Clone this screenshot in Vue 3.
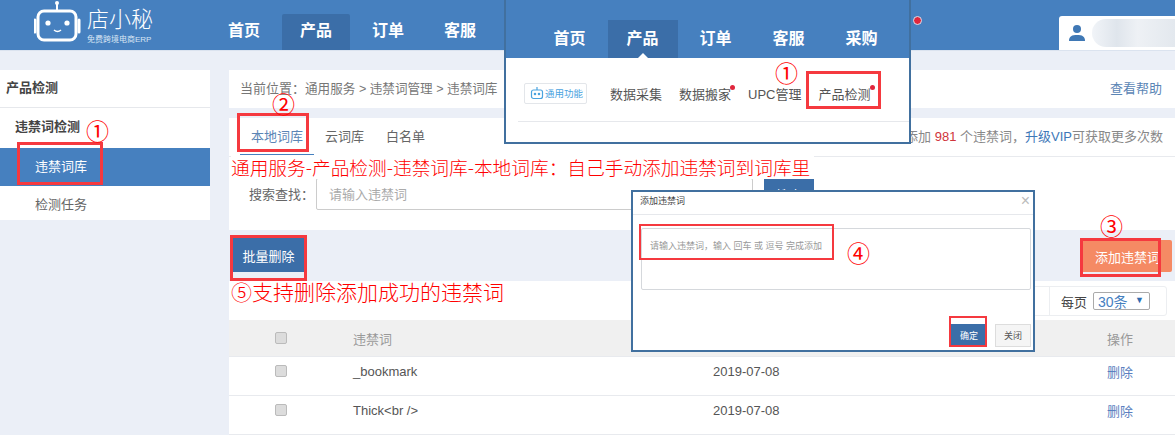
<template>
  <div class="page">
    <!-- top bar -->
    <header class="topbar">
      <div class="logo">
        <svg width="48" height="44" viewBox="0 0 48 44" fill="none" stroke="#fff">
          <path d="M23 2v8" stroke-width="2" />
          <circle cx="23" cy="3" r="2" fill="#fff" stroke="none" />
          <rect x="4" y="11" width="38" height="29" rx="6" stroke-width="3" />
          <path d="M1 20v12M45 20v12" stroke-width="3" stroke-linecap="round" />
          <circle cx="14" cy="23" r="2.6" fill="#fff" stroke="none" />
          <circle cx="33" cy="23" r="2.6" fill="#fff" stroke="none" />
          <path d="M20 30q3.500 3 7 0" stroke-width="1.500" />
        </svg>
        <div class="logo-text">
          <div class="logo-name">店小秘</div>
          <div class="logo-sub">免费跨境电商ERP</div>
        </div>
      </div>
      <nav class="nav">
        <a v-for="item in navItems" :key="item" class="nav-item" :class="{ active: item === '产品' }">{{ item }}</a>
      </nav>
      <div class="user-box">
        <svg width="18" height="18" viewBox="0 0 18 18" fill="#3f78b5">
          <circle cx="9" cy="5" r="4" />
          <path d="M1 17c0-5 3-6 8-6s8 1 8 6z" />
        </svg>
        <div class="user-blur"></div>
      </div>
    </header>

    <div class="content">
      <aside class="sidebar">
        <div class="side-title">产品检测</div>
        <div class="side-group">违禁词检测</div>
        <div class="side-link active">违禁词库</div>
        <div class="side-link">检测任务</div>
      </aside>

      <main class="main">
        <div class="crumb">
          <span>当前位置：</span>
          <span class="crumb-path">通用服务 &gt; 违禁词管理 &gt; 违禁词库</span>
          <a class="help">查看帮助</a>
        </div>

        <section class="filter">
          <div class="tabs">
            <a class="tab active">本地词库</a>
            <a class="tab">云词库</a>
            <a class="tab">白名单</a>
            <div class="quota">还可添加 <b>981</b> 个违禁词，<a>升级VIP</a>可获取更多次数</div>
          </div>
          <div class="search">
            <label>搜索查找：</label>
            <div class="search-input">请输入违禁词</div>
            <button class="btn-blue search-btn">搜索</button>
          </div>
        </section>

        <div class="toolbar">
          <button class="btn-blue batch">批量删除</button>
          <button class="btn-add">添加违禁词</button>
        </div>

        <section class="table-panel">
          <div class="pager">
            <div class="pager-box">
              <span class="pager-left"></span>
              <span>每页</span>
              <div class="page-select">30条<i>▼</i></div>
            </div>
          </div>
          <div class="row head">
            <div class="check-cell"><span class="check"></span></div>
            <div>违禁词</div>
            <div></div>
            <div>操作</div>
          </div>
          <div v-for="row in rows" :key="row" class="row">
            <div class="check-cell"><span class="check"></span></div>
            <div>{{ row }}</div>
            <div>2019-07-08</div>
            <div><a class="del">删除</a></div>
          </div>
        </section>
      </main>
    </div>

    <!-- pasted screenshot: menu -->
    <div class="shot-menu">
      <div class="menu-head">
        <a v-for="item in menuNav" :key="item" class="menu-nav" :class="{ active: item === '产品' }">{{ item }}</a>
        <span class="menu-arrow"></span>
      </div>
      <div class="menu-body">
        <div class="menu-tag">
          <svg width="14" height="14" viewBox="0 0 14 14" fill="none" stroke="#4aa3df" stroke-width="1.200">
            <rect x="1.500" y="4" width="11" height="8.500" rx="2" />
            <path d="M7 1v3" />
            <circle cx="5" cy="8" r=".7" fill="#4aa3df" />
            <circle cx="9" cy="8" r=".7" fill="#4aa3df" />
          </svg>
          <span>通用功能</span>
        </div>
        <span class="menu-link">数据采集</span>
        <span class="menu-link dot">数据搬家</span>
        <span class="menu-link">UPC管理</span>
        <span class="menu-link dot">产品检测</span>
      </div>
      <div class="menu-line"></div>
    </div>

    <!-- pasted screenshot: dialog -->
    <div class="shot-dialog">
      <div class="dialog-head">
        <span>添加违禁词</span>
        <span class="dialog-close">×</span>
      </div>
      <div class="dialog-area">请输入违禁词，输入 回车 或 逗号 完成添加</div>
      <div class="dialog-foot">
        <button class="dialog-ok">确定</button>
        <button class="dialog-cancel">关闭</button>
      </div>
    </div>

    <!-- annotations -->
    <div class="mark m-side"></div>
    <div class="mark m-tab"></div>
    <div class="mark m-menu"></div>
    <div class="mark m-area"></div>
    <div class="mark m-ok"></div>
    <div class="mark m-add"></div>
    <div class="mark m-batch"></div>
    <span class="num n1">①</span>
    <span class="num n2">②</span>
    <span class="num n3">①</span>
    <span class="num n4">③</span>
    <span class="num n5">④</span>
    <div class="note note-top">通用服务-产品检测-违禁词库-本地词库：自己手动添加违禁词到词库里</div>
    <div class="note note-bottom">⑤支持删除添加成功的违禁词</div>
    <span class="red-dot"></span>
  </div>
</template>

<script setup>
const navItems = ['首页', '产品', '订单', '客服']
const menuNav = ['首页', '产品', '订单', '客服', '采购']
const rows = ['_bookmark', 'Thick<br />']
</script>

<style>
body {
  margin: 0;
  overflow: hidden;
}
</style>

<style scoped>
.page {
  position: relative;
  width: 1175px;
  height: 435px;
  overflow: hidden;
  background: #ebeff7;
  color: #555;
  font-family: "Liberation Sans", "Noto Sans CJK SC", sans-serif;
  font-size: 13px;
}

.topbar {
  display: flex;
  height: 50px;
  background: #4680bf;
  border-bottom: 1px solid #dbe3ef;
  box-sizing: content-box;
}
.logo {
  display: flex;
  flex: none;
  width: 210px;
  padding-left: 34px;
  color: #fff;
  box-sizing: border-box;
}
.logo svg {
  flex: none;
  margin-right: 5px;
}
.logo-name {
  margin-top: 7px;
  font-size: 22px;
  line-height: 26px;
  font-weight: 300;
}
.logo-sub {
  margin-top: 2px;
  font-size: 8px;
  line-height: 10px;
  white-space: nowrap;
  color: #d9e6f4;
}
.nav {
  display: flex;
  gap: 4px;
  margin-top: 14px;
}
.nav-item {
  width: 68px;
  height: 36px;
  line-height: 34px;
  text-align: center;
  color: #fff;
  font-size: 16px;
  font-weight: 700;
  border-radius: 2px 2px 0 0;
}
.nav-item.active {
  background: #3b6ea8;
}
.user-box {
  display: flex;
  align-items: center;
  gap: 6px;
  margin: 16px 0 0 auto;
  width: 116px;
  padding-left: 9px;
  background: #fff;
  border-radius: 3px 0 0 0;
  box-sizing: border-box;
}
.user-blur {
  flex: 1;
  height: 28px;
  border-radius: 14px 0 0 14px;
  background: linear-gradient(90deg, #f1f4f8, #dfe5ec 30%, #eef1f5 55%, #e3e8ee);
}

.content {
  display: flex;
  align-items: flex-start;
  padding-top: 19px;
}
.sidebar {
  flex: none;
  width: 210px;
  height: 150px;
  background: #fff;
}
.side-title {
  height: 38px;
  padding-left: 6px;
  line-height: 36px;
  color: #444;
  font-weight: 700;
  border-bottom: 1px solid #e6e8ec;
  box-sizing: border-box;
}
.side-group {
  height: 40px;
  padding-left: 15px;
  line-height: 38px;
  color: #444;
  font-weight: 700;
}
.side-link {
  height: 38px;
  padding-left: 35px;
  line-height: 38px;
  color: #666;
}
.side-link.active {
  background: #4680bf;
  color: #fff;
}

.main {
  flex: none;
  width: 946px;
  margin-left: 19px;
}
.crumb {
  display: flex;
  height: 38px;
  padding: 0 13px 0 11px;
  align-items: center;
  line-height: 16px;
  background: #fff;
  color: #777;
  box-sizing: border-box;
}
.crumb-path {
  font-size: 12.600px;
}
.help {
  margin-left: auto;
  color: #5b85b5;
}
.filter {
  height: 112px;
  margin-top: 10px;
  background: #fff;
}
.tabs {
  display: flex;
  height: 38px;
  padding-left: 11px;
  border-bottom: 1px solid #e8eaee;
  box-sizing: content-box;
}
.tab {
  padding: 0 11px;
  line-height: 38px;
  color: #666;
}
.tab.active {
  color: #5b85b5;
  border-bottom: 2px solid #4680bf;
  height: 36px;
}
.quota {
  margin-left: auto;
  padding-right: 12px;
  line-height: 38px;
  color: #888;
}
.quota b {
  font-weight: 400;
  color: #d0343c;
}
.quota a {
  color: #3e78b8;
}
.search {
  display: flex;
  align-items: flex-start;
  padding: 21px 0 0 20px;
}
.search label {
  width: 67px;
  margin-top: 6px;
  color: #666;
}
.search-input {
  width: 437px;
  height: 32px;
  margin-right: 11px;
  padding-left: 12px;
  line-height: 32px;
  color: #aaa;
  border: 1px solid #ccc;
  border-radius: 2px;
  box-sizing: border-box;
}
.search-btn {
  width: 50px;
  height: 32px;
}
.btn-blue {
  border: 0;
  padding: 0;
  background: #3b6ea8;
  color: #fff;
  font: inherit;
}
.toolbar {
  display: flex;
  height: 51px;
  align-items: flex-start;
  justify-content: space-between;
  padding-right: 3px;
}
.batch {
  width: 73px;
  height: 34px;
  margin: 8px 0 0 3px;
}
.btn-add {
  width: 89px;
  height: 32px;
  margin-top: 10px;
  border: 0;
  border-radius: 0 2px 2px 0;
  background: #f58a64;
  color: #fff;
  font: inherit;
}
.table-panel {
  height: 154px;
  background: #fff;
}
.pager {
  display: flex;
  justify-content: flex-end;
  height: 39px;
  padding: 5px 8px 0 0;
  box-sizing: border-box;
}
.pager-box {
  display: flex;
  align-items: center;
  gap: 6px;
  width: 150px;
  height: 30px;
  padding-left: 31px;
  border: 1px solid #eceef1;
  border-radius: 3px;
  box-sizing: border-box;
  color: #444;
}
.pager-left {
  height: 28px;
  margin-right: 5px;
  border-left: 1px solid #eceef1;
}
.page-select {
  position: relative;
  width: 57px;
  height: 18px;
  padding-left: 4px;
  line-height: 18px;
  font-size: 14px;
  color: #4680bf;
  border: 1px solid #aaa;
  border-radius: 2px;
  box-sizing: border-box;
}
.page-select i {
  position: absolute;
  right: 5px;
  top: -2px;
  font-size: 9px;
  font-style: normal;
  color: #2f6cb0;
}
.row {
  display: grid;
  grid-template-columns: 124px 360px 394px 1fr;
  height: 28px;
  padding-bottom: 10px;
  align-items: center;
  color: #555;
  border-bottom: 1px solid #e8eaee;
  box-sizing: content-box;
}
.row.head {
  height: 36px;
  padding-bottom: 0;
  background: #f0f0f0;
  color: #999;
}
.check-cell {
  padding-left: 46px;
  display: flex;
}
.check {
  width: 12px;
  height: 12px;
  background: #dcdcdc;
  border: 1px solid #bbb;
  border-radius: 2px;
  box-sizing: border-box;
}
.del {
  color: #5b7fc0;
}

/* pasted menu */
.shot-menu {
  position: absolute;
  left: 504px;
  top: 0;
  width: 407px;
  height: 144px;
  border: 2px solid #41709f;
  border-top: 0;
  background: #fff;
  box-sizing: border-box;
}
.menu-head {
  position: relative;
  display: flex;
  height: 58px;
  padding-left: 27px;
  background: #4680bf;
  align-items: flex-end;
}
.menu-nav {
  width: 73px;
  height: 38px;
  line-height: 38px;
  text-align: center;
  color: #fff;
  font-size: 16px;
  font-weight: 700;
}
.menu-nav.active {
  width: 70px;
  margin: 0 1.500px;
  background: #3b6ea8;
}
.menu-arrow {
  position: absolute;
  left: 132px;
  bottom: 0;
  border: 5px solid transparent;
  border-bottom-color: #fff;
  border-top: 0;
}
.menu-body {
  display: flex;
  align-items: center;
  height: 50px;
  padding: 10px 0 0 18px;
  box-sizing: content-box;
  color: #555;
}
.menu-tag {
  display: flex;
  flex: none;
  align-items: center;
  gap: 1px;
  width: 63px;
  height: 21px;
  margin-right: 23px;
  padding-left: 5px;
  color: #4aa3df;
  font-size: 9.500px;
  border: 1px solid #e3e6ea;
  border-radius: 2px;
  box-sizing: border-box;
  white-space: nowrap;
}
.menu-link {
  position: relative;
  margin-right: 17px;
  white-space: nowrap;
}
.menu-link.dot::after {
  content: "";
  position: absolute;
  right: -4px;
  top: 1px;
  width: 5px;
  height: 5px;
  border-radius: 50%;
  background: #e0263c;
}
.menu-line {
  height: 1px;
  margin: 3px 0 0 12px;
  background: #e6e8ec;
}

/* pasted dialog */
.shot-dialog {
  position: absolute;
  left: 631px;
  top: 190px;
  width: 404px;
  height: 162px;
  background: #fff;
  border: 2px solid #41709f;
  box-sizing: border-box;
}
.dialog-head {
  display: flex;
  justify-content: space-between;
  height: 22px;
  padding: 0 3px 0 7px;
  line-height: 18px;
  font-size: 9px;
  color: #444;
  border-bottom: 1px solid #e6e8ec;
}
.dialog-close {
  color: #bbb;
  font-size: 16px;
}
.dialog-area {
  height: 62px;
  margin: 13px 2px 0 8px;
  padding: 10px 8px;
  color: #999;
  font-size: 9px;
  border: 1px solid #d5d8dc;
  border-radius: 2px;
  box-sizing: border-box;
}
.dialog-foot {
  display: flex;
  justify-content: flex-end;
  gap: 8px;
  padding: 34px 2px 0 0;
}
.dialog-foot button {
  width: 36px;
  height: 23px;
  padding: 0;
  font: inherit;
  font-size: 9px;
}
.dialog-ok {
  border: 0;
  background: #3b6ea8;
  color: #fff;
}
.dialog-cancel {
  border: 1px solid #ddd;
  background: #f5f5f5;
  color: #555;
}

/* red annotations */
.mark {
  position: absolute;
  border: 3px solid #f5393f;
  box-sizing: border-box;
}
.m-side { left: 17px; top: 142px; width: 86px; height: 43px; }
.m-tab { left: 237px; top: 113px; width: 72px; height: 39px; }
.m-menu { left: 806px; top: 71px; width: 75px; height: 38px; }
.m-area { left: 639px; top: 224px; width: 195px; height: 36px; border-width: 2px; }
.m-ok { left: 949px; top: 316px; width: 38px; height: 31px; border-width: 2px; }
.m-add { left: 1080px; top: 238px; width: 81px; height: 39px; }
.m-batch { left: 230px; top: 235px; width: 77px; height: 46px; }
.num {
  position: absolute;
  color: #f00;
  font-size: 23px;
  line-height: 18px;
  font-family: "Noto Sans CJK SC", sans-serif;
}
.n1 { left: 86px; top: 121px; }
.n2 { left: 272px; top: 94px; }
.n3 { left: 775px; top: 63px; }
.n4 { left: 1100px; top: 216px; }
.n5 { left: 847px; top: 243px; }
.note {
  position: absolute;
  color: #f00;
  white-space: nowrap;
  font-family: "Noto Sans CJK SC", sans-serif;
  font-weight: 300;
}
.note-top {
  left: 231px;
  top: 155px;
  padding-right: 4px;
  background: #fff;
  font-size: 18.700px;
  line-height: 24px;
}
.note-bottom {
  left: 231px;
  top: 278px;
  font-size: 21px;
  line-height: 26px;
}
.red-dot {
  position: absolute;
  left: 913px;
  top: 16px;
  width: 9px;
  height: 9px;
  border: 1px solid #d8e3f0;
  border-radius: 50%;
  background: #e0263c;
  box-sizing: border-box;
}
</style>
